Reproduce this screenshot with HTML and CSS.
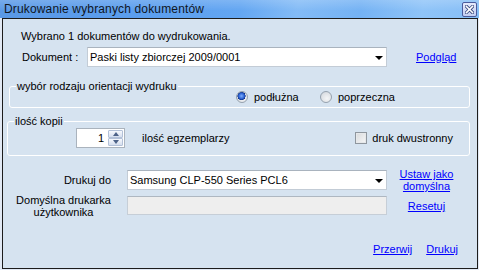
FILE: index.html
```html
<!DOCTYPE html>
<html lang="pl">
<head>
<meta charset="utf-8">
<title>Drukowanie wybranych dokumentów</title>
<link rel="stylesheet" href="styles.css">
</head>
<body>
<div class="window">
  <div class="titlebar">
    <span class="title">Drukowanie wybranych dokumentów</span>
    <span class="close" aria-label="Zamknij">
      <svg width="9" height="9" viewBox="0 0 9 9">
        <path d="M1.5 1.5 L7.5 7.5 M7.5 1.5 L1.5 7.5" stroke="#3a4a80" stroke-width="3.2" stroke-linecap="square"/>
        <path d="M1.5 1.5 L7.5 7.5 M7.5 1.5 L1.5 7.5" stroke="#ffffff" stroke-width="1.6" stroke-linecap="square"/>
      </svg>
    </span>
  </div>
  <div class="frame">
    <div class="client">
      <p class="info">Wybrano 1 dokumentów do wydrukowania.</p>

      <div class="doc-row">
        <span class="doc-label">Dokument :</span>
        <div class="combo doc-combo">
          <span class="combo-text">Paski listy zbiorczej 2009/0001</span>
          <span class="combo-arrow"></span>
        </div>
        <a class="link preview-link" href="#">Podgląd</a>
      </div>

      <fieldset class="group orient">
        <legend>wybór rodzaju orientacji wydruku</legend>
        <div class="radios">
          <span class="radio-item"><span class="radio checked"></span><span>podłużna</span></span>
          <span class="radio-item"><span class="radio"></span><span>poprzeczna</span></span>
        </div>
      </fieldset>

      <fieldset class="group copies">
        <legend>ilość kopii</legend>
        <div class="copies-row">
          <div class="spin">
            <span class="spin-value">1</span>
            <span class="spin-buttons">
              <span class="spin-btn"><span class="tri-up"></span></span>
              <span class="spin-btn"><span class="tri-down"></span></span>
            </span>
          </div>
          <span class="copies-label">ilość egzemplarzy</span>
          <span class="check-item"><span class="checkbox"></span><span>druk dwustronny</span></span>
        </div>
      </fieldset>

      <div class="printer-grid">
        <span class="plabel right">Drukuj do</span>
        <div class="combo">
          <span class="combo-text">Samsung CLP-550 Series PCL6</span>
          <span class="combo-arrow"></span>
        </div>
        <a class="link center" href="#">Ustaw jako<br>domyślna</a>

        <span class="plabel centered">Domyślna drukarka<br>użytkownika</span>
        <div class="disabled-box"></div>
        <a class="link center" href="#">Resetuj</a>
      </div>

      <div class="actions">
        <a class="link" href="#">Przerwij</a>
        <a class="link" href="#">Drukuj</a>
      </div>
    </div>
  </div>
</div>
</body>
</html>
```

FILE: styles.css
```css
* { box-sizing: border-box; }

html, body {
  margin: 0;
  padding: 0;
}

body {
  width: 479px;
  height: 270px;
  overflow: hidden;
  font-family: "Liberation Sans", Arial, sans-serif;
  font-size: 11px;
  line-height: 13px;
  color: #000;
}

.window {
  width: 479px;
  height: 270px;
  display: flex;
  flex-direction: column;
}

.titlebar {
  height: 18px;
  flex: none;
  display: flex;
  align-items: center;
  justify-content: space-between;
  padding: 0 2px 0 4px;
  background:
    linear-gradient(to bottom, rgba(255,255,255,0.18), rgba(255,255,255,0) 60%),
    linear-gradient(100deg, #5a99e6 0%, #5b9eee 30%, #63a6f2 50%, #83bbf6 62%, #74b2f4 75%, #8fc4f8 88%, #86bef6 100%);
}

.title {
  font-size: 12px;
  color: #10161e;
  line-height: 16px;
  letter-spacing: 0.15px;
}

.close {
  width: 15px;
  height: 15px;
  border: 1px solid #4a5b9c;
  border-radius: 2px;
  background: linear-gradient(to bottom, #e4e9fb, #c4cff2);
  display: flex;
  align-items: center;
  justify-content: center;
}

.frame {
  flex: 1;
  display: flex;
  padding: 0 1px 1px 2px;
  background: #e2e9f4;
}

.client {
  flex: 1;
  display: flex;
  flex-direction: column;
  border: 1px solid #1c1c1c;
  background: #d6e3f0;
}

.info {
  margin: 11px 0 0 18px;
}

.doc-row {
  display: flex;
  align-items: center;
  height: 20px;
  margin-top: 4px;
  padding-left: 19px;
}

.doc-label {
  width: 65px;
}

.combo {
  width: 300px;
  height: 20px;
  background: #fff;
  border: 1px solid #c3ccd6;
  border-top-color: #a9b3be;
  display: flex;
  align-items: center;
  justify-content: space-between;
  padding: 0 3px 0 2px;
}

.combo-arrow {
  width: 0;
  height: 0;
  border-left: 4px solid transparent;
  border-right: 4px solid transparent;
  border-top: 4px solid #000;
  margin-top: 1px;
}

.link {
  color: #0000ff;
  text-decoration: underline;
}

.preview-link {
  margin-left: 29px;
}

.group {
  margin: 0;
  border: 1px solid #ffffff;
  border-radius: 3px;
  padding: 0;
  min-width: 0;
}

.group legend {
  padding: 0 1px;
  line-height: 12px;
}

.orient {
  margin: 13px 0 0 6px;
  width: 461px;
  padding: 0 0 5px 6px;
}

.radios {
  height: 10px;
  display: flex;
  align-items: center;
  padding-left: 220px;
}

.radio-item {
  display: flex;
  align-items: center;
  gap: 6px;
  width: 84px;
}

.radio {
  width: 12px;
  height: 12px;
  border-radius: 50%;
  border: 1px solid #95a1ae;
  background: radial-gradient(circle at 60% 65%, #f4f5f6 0%, #dfe2e6 60%, #c9ced4 100%);
  display: inline-block;
}

.radio.checked {
  background:
    radial-gradient(circle at 45% 40%, #7fb0ff 0%, #2a5fd0 35%, #10338a 48%, transparent 52%),
    radial-gradient(circle at 60% 65%, #f4f5f6 0%, #dfe2e6 60%, #c9ced4 100%);
}

.copies {
  margin: 7px 0 0 4px;
  width: 463px;
  padding: 0 16px 7px 6px;
}

.copies-row {
  height: 20px;
  margin-top: 1px;
  display: flex;
  align-items: center;
}

.spin {
  width: 49px;
  height: 20px;
  margin-left: 62px;
  background: #fff;
  border: 1px solid #aab3bd;
  display: flex;
  align-items: center;
  justify-content: flex-end;
  padding: 1px;
}

.spin-value {
  margin-right: 4px;
}

.spin-buttons {
  display: flex;
  flex-direction: column;
  height: 100%;
}

.spin-btn {
  width: 15px;
  flex: 1;
  border: 1px solid #b3c1d8;
  border-radius: 1px;
  background: linear-gradient(to bottom, #f7f9fd, #d5deee);
  display: flex;
  align-items: center;
  justify-content: center;
}

.tri-up {
  width: 0; height: 0;
  border-left: 3.5px solid transparent;
  border-right: 3.5px solid transparent;
  border-bottom: 4px solid #4d6288;
}

.tri-down {
  width: 0; height: 0;
  border-left: 3.5px solid transparent;
  border-right: 3.5px solid transparent;
  border-top: 4px solid #4d6288;
}

.copies-label {
  margin-left: 17px;
}

.check-item {
  margin-left: auto;
  display: flex;
  align-items: center;
  gap: 5px;
}

.checkbox {
  width: 12px;
  height: 12px;
  border: 1px solid #8f969e;
  background: linear-gradient(135deg, #d8dadc, #f6f7f8);
  box-shadow: inset 0 0 0 1px #e6e8ea;
}

.printer-grid {
  display: grid;
  grid-template-columns: 99px 260px 56px;
  grid-template-rows: 20px 20px;
  column-gap: 14px;
  row-gap: 6px;
  margin-top: 14px;
  padding-left: 11px;
  align-items: center;
}

.printer-grid .link {
  margin-left: -5px;
  line-height: 12px;
}

.plabel.right {
  text-align: right;
  padding-right: 2px;
}

.plabel.centered {
  text-align: center;
  line-height: 12px;
}

.printer-grid .combo {
  width: 260px;
}

.disabled-box {
  height: 19px;
  align-self: start;
  background: #eeeeee;
  border: 1px solid #c6ced7;
  border-top-color: #aeb7c1;
}

.center {
  text-align: center;
}

.actions {
  margin-top: auto;
  display: flex;
  justify-content: flex-end;
  gap: 14px;
  padding: 0 19px 12px 0;
}
```
